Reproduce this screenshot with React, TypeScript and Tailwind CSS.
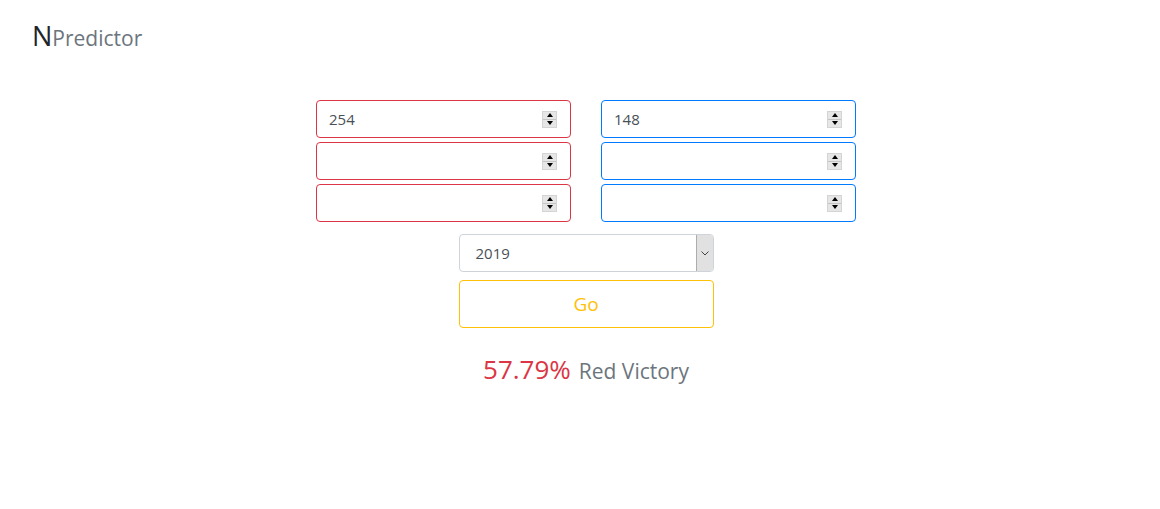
import React from 'react';

const Spinner: React.FC = () => (
  <div className="flex flex-col w-[15px] h-[17px] border border-[#d4d4d4] bg-[#e6e6e6]">
    <div className="flex-1 flex items-center justify-center border-b border-[#c4c4c4]">
      <div className="w-0 h-0 border-l-[3px] border-r-[3px] border-b-[4px] border-l-transparent border-r-transparent border-b-black" />
    </div>
    <div className="flex-1 flex items-center justify-center">
      <div className="w-0 h-0 border-l-[3px] border-r-[3px] border-t-[4px] border-l-transparent border-r-transparent border-t-black" />
    </div>
  </div>
);

const NumberField: React.FC<{ value?: string; color: 'red' | 'blue' }> = ({ value, color }) => (
  <div
    className={
      color === 'red'
        ? 'flex items-center h-[38px] w-[255px] border border-[#dc3545] rounded-[4px] pl-3 pr-[13px]'
        : 'flex items-center h-[38px] w-[255px] border border-[#007bff] rounded-[4px] pl-3 pr-[13px]'
    }
  >
    <span className="flex-1 text-[15px] text-[#495057]">{value}</span>
    <Spinner />
  </div>
);

const App: React.FC = () => {
  return (
    <div className="w-[1160px] h-[509px] bg-white font-['Open_Sans','Noto_Sans',sans-serif]">
      <div className="pt-[22px] pl-[32px] flex items-baseline h-[45px]">
        <span className="text-[27px] text-[#212529] leading-none">N</span>
        <span className="text-[21px] text-[#6c757d] leading-none">Predictor</span>
      </div>

      <div className="mt-[55px] flex flex-col items-center pl-[12px]">
        <div className="flex gap-[30px]">
          <div className="flex flex-col gap-[4px]">
            <NumberField value="254" color="red" />
            <NumberField color="red" />
            <NumberField color="red" />
          </div>
          <div className="flex flex-col gap-[4px]">
            <NumberField value="148" color="blue" />
            <NumberField color="blue" />
            <NumberField color="blue" />
          </div>
        </div>

        <div className="mt-[12px] flex items-center h-[38px] w-[255px] border border-[#ced4da] rounded-[4px] overflow-hidden">
          <span className="flex-1 pl-4 text-[15px] text-[#495057]">2019</span>
          <div className="h-full w-[17px] bg-[#e1e1e1] border-l border-[#adadad] flex items-center justify-center">
            <svg width="8" height="5" viewBox="0 0 8 5">
              <path d="M0.5 0.5 L4 4 L7.5 0.5" fill="none" stroke="#444" strokeWidth="1" />
            </svg>
          </div>
        </div>

        <button className="mt-[8px] h-[48px] w-[255px] border border-[#ffc107] rounded-[4px] text-[19px] text-[#ffc107] bg-white">
          Go
        </button>

        <div className="mt-[22px] flex items-baseline gap-[8px]">
          <span className="text-[26px] text-[#dc3545]">57.79%</span>
          <span className="text-[21px] text-[#6c757d]">Red Victory</span>
        </div>
      </div>
    </div>
  );
};

export default App;
